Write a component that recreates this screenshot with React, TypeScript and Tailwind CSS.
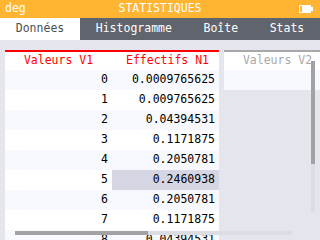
import React from 'react';

const tabs = ['Données', 'Histogramme', 'Boîte', 'Stats'];

const rows = [
  { v: '0', n: '0.0009765625' },
  { v: '1', n: '0.009765625' },
  { v: '2', n: '0.04394531' },
  { v: '3', n: '0.1171875' },
  { v: '4', n: '0.2050781' },
  { v: '5', n: '0.2460938' },
  { v: '6', n: '0.2050781' },
  { v: '7', n: '0.1171875' },
  { v: '8', n: '0.04394531' },
];

function Battery() {
  return (
    <svg width="15" height="8" viewBox="0 0 15 8">
      <rect x="0" y="0" width="12" height="8" fill="#fff" />
      <rect x="1" y="1" width="2" height="6" fill="#ffb531" />
      <rect x="12" y="2" width="2" height="4" fill="#fff" />
    </svg>
  );
}

export default function App() {
  return (
    <div
      className="relative w-[320px] h-[240px] overflow-hidden bg-[#e5e5ee] text-[11.5px] leading-none"
      style={{ fontFamily: '"DejaVu Sans Mono", "Liberation Mono", monospace' }}
    >
      {/* Title bar */}
      <div className="relative h-[18px] bg-[#ffb531] text-white flex items-center px-[5px]">
        <span>deg</span>
        <span className="absolute left-0 right-0 text-center">STATISTIQUES</span>
        <div className="ml-auto mr-[1px]">
          <Battery />
        </div>
      </div>

      {/* Tabs: extra space shared equally, like the calculator */}
      <div className="flex h-[22px] bg-[#60656d]">
        {tabs.map((t, i) => (
          <div
            key={t}
            className={`flex-auto flex items-center justify-center ${
              i === 0 ? 'bg-white text-[#4b4f56]' : 'text-white'
            }`}
          >
            {t}
          </div>
        ))}
      </div>

      {/* Table */}
      <div className="flex pt-[10px] pl-[5px]">
        <div className="w-[107px] shrink-0">
          <div className="h-[2px] bg-[#ff0000]" />
          <div className="h-[18px] bg-white text-[#ff0000] flex items-center justify-center">Valeurs V1</div>
          {rows.map((r, i) => (
            <div
              key={r.v}
              className={`h-[20px] flex items-center justify-end pr-[4px] text-black ${
                i % 2 === 0 ? 'bg-[#f7f9fe]' : 'bg-white'
              }`}
            >
              {r.v}
            </div>
          ))}
        </div>
        <div className="w-[107px] shrink-0">
          <div className="h-[2px] bg-[#ff0000]" />
          <div className="h-[18px] bg-white text-[#ff0000] flex items-center justify-center pl-[4px]">Effectifs N1</div>
          {rows.map((r, i) => (
            <div
              key={r.v}
              className={`h-[20px] flex items-center justify-end pr-[4px] text-black ${
                i === 5 ? 'bg-[#d4d6e4]' : i % 2 === 0 ? 'bg-[#f7f9fe]' : 'bg-white'
              }`}
            >
              {r.n}
            </div>
          ))}
        </div>
        <div className="w-[107px] shrink-0 ml-[5px]">
          <div className="h-[2px] bg-[#a8a8a8]" />
          <div className="h-[18px] bg-white text-[#a8a8a8] flex items-center justify-center">Valeurs V2</div>
          <div className="h-[20px] bg-[#f7f9fe]" />
        </div>
      </div>

      {/* Vertical scrollbar */}
      <div className="absolute left-[311px] top-[61px] w-[4px] h-[151px] bg-[#dcdce3]">
        <div className="h-[103px] bg-[#a2a2a4]" />
      </div>

      {/* Horizontal scrollbar */}
      <div className="absolute left-[15px] top-[231px] w-[277px] h-[4px] bg-[#dcdce3]">
        <div className="w-[133px] h-full bg-[#a2a2a4]" />
      </div>
    </div>
  );
}
